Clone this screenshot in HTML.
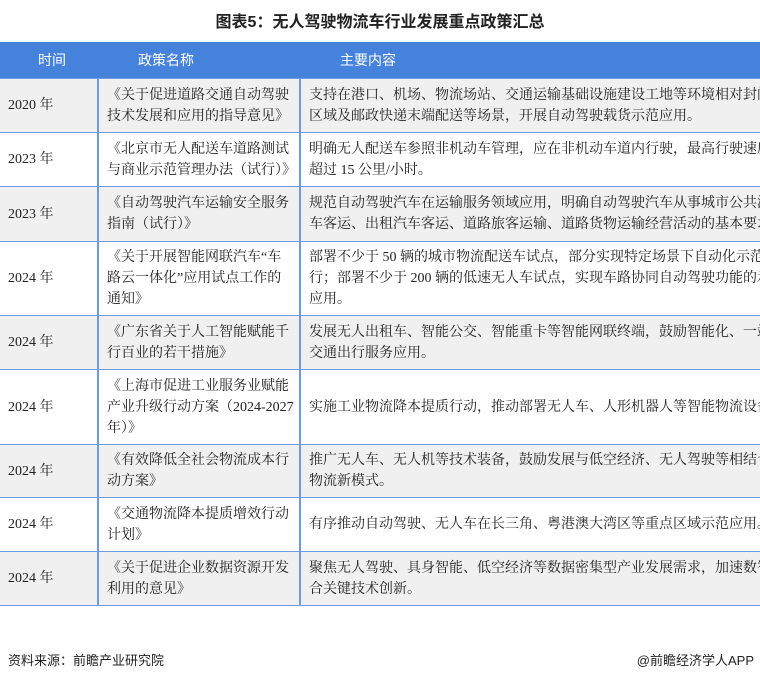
<!DOCTYPE html>
<html><head><meta charset="utf-8"><style>
body{margin:0;width:760px;height:680px;background:#fff;overflow:hidden;position:relative;font-family:"Liberation Serif","Noto Serif CJK SC",serif;color:#222}
.title{position:absolute;top:8px;left:0;width:760px;text-align:center;font:bold 16px "Liberation Sans","Noto Sans CJK SC",sans-serif;color:#222}
table{position:absolute;top:42px;left:0;border-collapse:collapse;table-layout:fixed;width:760px}
th{background:#4582dc;color:#fff;font:14px "Liberation Sans","Noto Sans CJK SC",sans-serif;height:36px;font-weight:normal;padding:0}
td{font-size:14px;line-height:21px;padding:0 0 0 8px;border-top:1px solid #6b9ce3;vertical-align:middle;overflow:hidden}
td.c{border-left:2px solid #6b9ce3;white-space:nowrap}
td.n{border-left:2px solid #6b9ce3;padding-left:8px;padding-right:4px}
tr.g td{background:#f0f0f0}
tr:last-child td{border-bottom:1px solid #6b9ce3}
.foot{position:absolute;top:650px;font:13px "Liberation Sans","Noto Sans CJK SC",sans-serif;color:#222}
</style></head><body>
<div class="title">图表5：无人驾驶物流车行业发展重点政策汇总</div>
<table>
<colgroup><col style="width:98px"><col style="width:202px"><col style="width:460px"></colgroup>
<tr><th style="text-align:left;padding-left:38px">时间</th><th style="text-align:left;padding-left:40px">政策名称</th><th style="text-align:left;padding-left:40px">主要内容</th></tr>
<tr class="g" style="height:54px"><td>2020 年</td><td class="n">《关于促进道路交通自动驾驶技术发展和应用的指导意见》</td><td class="c">支持在港口、机场、物流场站、交通运输基础设施建设工地等环境相对封闭<br>区域及邮政快递末端配送等场景，开展自动驾驶载货示范应用。</td></tr>
<tr style="height:54px"><td>2023 年</td><td class="n">《北京市无人配送车道路测试与商业示范管理办法（试行）》</td><td class="c">明确无人配送车参照非机动车管理，应在非机动车道内行驶，最高行驶速度<br>超过 15 公里/小时。</td></tr>
<tr class="g" style="height:55px"><td>2023 年</td><td class="n">《自动驾驶汽车运输安全服务指南（试行）》</td><td class="c">规范自动驾驶汽车在运输服务领域应用，明确自动驾驶汽车从事城市公共汽<br>车客运、出租汽车客运、道路旅客运输、道路货物运输经营活动的基本要求</td></tr>
<tr style="height:74px"><td>2024 年</td><td class="n">《关于开展智能网联汽车“车路云一体化”应用试点工作的通知》</td><td class="c">部署不少于 50 辆的城市物流配送车试点，部分实现特定场景下自动化示范<br>行；部署不少于 200 辆的低速无人车试点，实现车路协同自动驾驶功能的示<br>应用。</td></tr>
<tr class="g" style="height:54px"><td>2024 年</td><td class="n">《广东省关于人工智能赋能千行百业的若干措施》</td><td class="c">发展无人出租车、智能公交、智能重卡等智能网联终端，鼓励智能化、一站<br>交通出行服务应用。</td></tr>
<tr style="height:75px"><td>2024 年</td><td class="n">《上海市促进工业服务业赋能产业升级行动方案（2024-2027 年）》</td><td class="c">实施工业物流降本提质行动，推动部署无人车、人形机器人等智能物流设备</td></tr>
<tr class="g" style="height:53px"><td>2024 年</td><td class="n">《有效降低全社会物流成本行动方案》</td><td class="c">推广无人车、无人机等技术装备，鼓励发展与低空经济、无人驾驶等相结合<br>物流新模式。</td></tr>
<tr style="height:54px"><td>2024 年</td><td class="n">《交通物流降本提质增效行动计划》</td><td class="c">有序推动自动驾驶、无人车在长三角、粤港澳大湾区等重点区域示范应用。</td></tr>
<tr class="g" style="height:54px"><td>2024 年</td><td class="n">《关于促进企业数据资源开发利用的意见》</td><td class="c">聚焦无人驾驶、具身智能、低空经济等数据密集型产业发展需求，加速数智<br>合关键技术创新。</td></tr>
</table>
<div class="foot" style="left:8px">资料来源：前瞻产业研究院</div>
<div class="foot" style="right:6px">@前瞻经济学人APP</div>
</body></html>
